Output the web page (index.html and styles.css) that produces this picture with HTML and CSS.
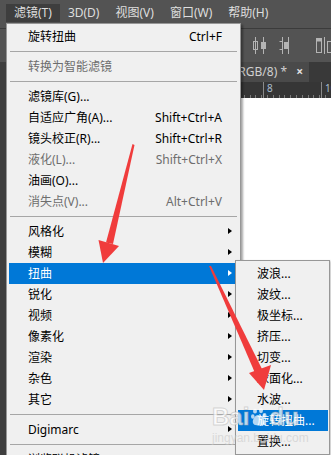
FILE: index.html
```html
<!DOCTYPE html>
<html lang="zh-CN">
<head>
<meta charset="utf-8">
<title>滤镜菜单</title>
<link rel="stylesheet" href="styles.css">
</head>
<body>
<div class="app">
  <div class="menubar">
    <span class="mb-item active">滤镜(T)</span>
    <span class="mb-item">3D(D)</span>
    <span class="mb-item">视图(V)</span>
    <span class="mb-item">窗口(W)</span>
    <span class="mb-item">帮助(H)</span>
  </div>
  <div class="toolbar">
    <svg class="tb-icon" width="13" height="17" viewBox="0 0 13 17"><path d="M2.5 0v17M10.5 0v17" stroke="#b4b4b4" stroke-width="1"/><rect x="0.5" y="4.5" width="4" height="8" fill="none" stroke="#b4b4b4"/><rect x="8" y="5" width="5" height="7" fill="#b4b4b4"/></svg>
    <svg class="tb-icon" width="14" height="17" viewBox="0 0 14 17"><path d="M2.5 4.5h3v8h-3M11.5 0v17" stroke="#b4b4b4" fill="none"/><rect x="7" y="5" width="4" height="7" fill="#b4b4b4"/><path d="M5.5 0v17" stroke="#b4b4b4"/></svg>
    <span class="tb-sep"></span>
    <svg class="tb-icon" width="16" height="17" viewBox="0 0 16 17"><rect x="0.5" y="1.5" width="5" height="14" fill="none" stroke="#b4b4b4"/><rect x="0.5" y="1.5" width="5" height="3" fill="#b4b4b4"/><path d="M8.5 0v17" stroke="#b4b4b4"/><rect x="11.5" y="4.5" width="5" height="11" fill="none" stroke="#b4b4b4"/></svg>
  </div>
  <div class="work">
    <div class="tools"></div>
    <div class="doc">
      <div class="tabs">
        <div class="tab">未标题-1 @ 66.7%(RGB/8) * <span class="close">×</span></div>
      </div>
      <div class="ruler">
        <span class="major">8</span>
        <span class="major">10</span>
      </div>
      <div class="canvas"></div>
    </div>
  </div>

  <div class="menu">
    <div class="item"><span>旋转扭曲</span><span class="key">Ctrl+F</span><span></span></div>
    <div class="sep"></div>
    <div class="item disabled"><span>转换为智能滤镜</span><span class="key"></span><span></span></div>
    <div class="sep"></div>
    <div class="item"><span>滤镜库(G)...</span><span class="key"></span><span></span></div>
    <div class="item"><span>自适应广角(A)...</span><span class="key">Shift+Ctrl+A</span><span></span></div>
    <div class="item"><span>镜头校正(R)...</span><span class="key">Shift+Ctrl+R</span><span></span></div>
    <div class="item disabled"><span>液化(L)...</span><span class="key">Shift+Ctrl+X</span><span></span></div>
    <div class="item"><span>油画(O)...</span><span class="key"></span><span></span></div>
    <div class="item disabled"><span>消失点(V)...</span><span class="key">Alt+Ctrl+V</span><span></span></div>
    <div class="sep"></div>
    <div class="item"><span>风格化</span><span class="key"></span><span class="arr"></span></div>
    <div class="item"><span>模糊</span><span class="key"></span><span class="arr"></span></div>
    <div class="item hl"><span>扭曲</span><span class="key"></span><span class="arr"></span></div>
    <div class="item"><span>锐化</span><span class="key"></span><span class="arr"></span></div>
    <div class="item"><span>视频</span><span class="key"></span><span class="arr"></span></div>
    <div class="item"><span>像素化</span><span class="key"></span><span class="arr"></span></div>
    <div class="item"><span>渲染</span><span class="key"></span><span class="arr"></span></div>
    <div class="item"><span>杂色</span><span class="key"></span><span class="arr"></span></div>
    <div class="item"><span>其它</span><span class="key"></span><span class="arr"></span></div>
    <div class="sep"></div>
    <div class="item"><span>Digimarc</span><span class="key"></span><span class="arr"></span></div>
    <div class="sep"></div>
    <div class="item"><span>浏览联机滤镜...</span><span class="key"></span><span></span></div>
  </div>

  <div class="submenu">
    <div class="sitem">波浪...</div>
    <div class="sitem">波纹...</div>
    <div class="sitem">极坐标...</div>
    <div class="sitem">挤压...</div>
    <div class="sitem">切变...</div>
    <div class="sitem">球面化...</div>
    <div class="sitem">水波...</div>
    <div class="sitem hl">旋转扭曲...</div>
    <div class="sitem">置换...</div>
  </div>

  <svg class="annot" width="331" height="455" viewBox="0 0 331 455">
    <polygon points="132.5,144 134.5,145 113,244 106,242.5" fill="#f03c3c"/>
    <polygon points="98.5,240 119,246 103,263" fill="#f03c3c"/>
    <polygon points="209,266 211,266 262,369 255,373" fill="#f03c3c"/>
    <polygon points="249,373 271,365 264,390" fill="#f03c3c"/>
  </svg>

  <div class="watermark">
    <div class="wm-logo">
      <span class="wm-big">Bai</span>
      <svg class="wm-paw" width="17" height="18" viewBox="0 0 17 18">
        <ellipse cx="4" cy="3" rx="2" ry="2.6"/>
        <ellipse cx="10" cy="2.6" rx="2" ry="2.6"/>
        <ellipse cx="1.8" cy="8.5" rx="1.8" ry="2.3"/>
        <ellipse cx="13.5" cy="7.5" rx="2" ry="2.4"/>
        <path d="M7 7c-3 0-6 5-5 8s4 2 6 2 5 1 6-2-4-8-7-8z"/>
      </svg>
      <span class="wm-big">du</span>
    </div>
    <div class="wm-url">jingyan.baidu.com</div>
  </div>
</div>
</body>
</html>
```
FILE: styles.css
```css
html, body {
  margin: 0;
  padding: 0;
}
body {
  width: 331px;
  height: 455px;
  overflow: hidden;
  background: #535353;
  font-family: "Noto Sans", "Noto Sans CJK SC", sans-serif;
  font-size: 12px;
}
.app {
  position: relative;
  width: 331px;
  height: 455px;
  display: flex;
  flex-direction: column;
  overflow: hidden;
}

/* menubar */
.menubar {
  height: 29px;
  box-sizing: border-box;
  background: #535353;
  border-bottom: 1px solid #3b3b3b;
  display: flex;
  align-items: flex-start;
  padding: 4px 0 0 6px;
}
.mb-item {
  height: 18px;
  line-height: 18px;
  padding: 0 8px;
  color: #dedede;
  white-space: nowrap;
}
.mb-item.active {
  background: #3e3e3e;
}

/* toolbar */
.toolbar {
  height: 33px;
  background: #535353;
  display: flex;
  align-items: center;
  padding-left: 253px;
  gap: 11px;
  flex: none;
}
.tb-icon {
  flex: none;
  display: block;
}
.tb-sep {
  width: 1px;
  height: 22px;
  background: #3a3a3a;
  margin: 0 1px 0 2px;
}

/* workspace */
.work {
  flex: 1;
  display: flex;
}
.tools {
  width: 6px;
  background: #3e3e3e;
  flex: none;
}
.doc {
  flex: 1;
  display: flex;
  flex-direction: column;
}
.tabs {
  height: 20px;
  background: #393939;
  display: flex;
  flex: none;
}
.tab {
  width: 303px;
  flex: none;
  box-sizing: border-box;
  background: #4a4a4a;
  color: #d0d0d0;
  font-size: 12px;
  line-height: 20px;
  text-align: right;
  padding-right: 6px;
  white-space: nowrap;
  overflow: hidden;
}
.close {
  display: inline-block;
  margin-left: 6px;
  font-weight: bold;
  color: #e0e0e0;
}
.ruler {
  height: 16px;
  flex: none;
  background-color: #363636;
  background-image: repeating-linear-gradient(to right, #7a7a7a 0 1px, transparent 1px 5.8px);
  background-size: 100% 3px;
  background-repeat: no-repeat;
  background-position: 0 100%;
  display: flex;
  padding-left: 257px;
}
.major {
  width: 58px;
  flex: none;
  border-left: 1px solid #8a8a8a;
  color: #a9bdd0;
  font-size: 10px;
  line-height: 12px;
  padding-left: 3px;
  box-sizing: border-box;
}
.canvas {
  flex: 1;
  background: #ffffff;
}

/* dropdown menu */
.menu {
  position: absolute;
  left: 6px;
  top: 23px;
  width: 235px;
  box-sizing: border-box;
  background: #f0f0f0;
  border: 1px solid #979797;
  padding: 2px 4px 2px 2px;
  box-shadow: 2px 2px 2px rgba(0, 0, 0, 0.35);
  color: #000;
}
.item {
  height: 21px;
  display: grid;
  grid-template-columns: 1fr auto 14px;
  align-items: center;
  padding-left: 19px;
  white-space: nowrap;
  line-height: 21px;
}
.item.disabled {
  color: #6d6d6d;
}
.item.hl {
  background: #0078d7;
  color: #fff;
}
.arr {
  justify-self: start;
  margin-left: 6px;
  width: 0;
  height: 0;
  border-left: 4px solid #000;
  border-top: 3.5px solid transparent;
  border-bottom: 3.5px solid transparent;
  margin-top: -2px;
}
.item.hl .arr {
  border-left-color: #fff;
}
.sep {
  height: 9px;
  margin: 0 -1px 0 1px;
  box-sizing: border-box;
  padding-top: 4px;
}
.sep::before {
  content: "";
  display: block;
  height: 1px;
  background: #a6a6a6;
}

/* submenu */
.submenu {
  position: absolute;
  left: 235px;
  top: 260px;
  width: 95px;
  box-sizing: border-box;
  background: #f0f0f0;
  border: 1px solid #979797;
  padding: 2px 1px 2px 2px;
  box-shadow: 1px 1px 2px rgba(0, 0, 0, 0.25);
}
.sitem {
  height: 21px;
  line-height: 21px;
  padding-left: 19px;
  white-space: nowrap;
  color: #000;
}
.sitem.hl {
  background: #0078d7;
  color: #fff;
}

/* annotations */
.annot {
  position: absolute;
  left: 0;
  top: 0;
  pointer-events: none;
}
.watermark {
  position: absolute;
  left: 212px;
  top: 404px;
  pointer-events: none;
}
.wm-logo {
  display: flex;
  align-items: center;
  height: 26px;
}
.wm-big {
  font-family: "Liberation Sans", sans-serif;
  font-weight: bold;
  font-size: 24px;
  line-height: 26px;
  color: rgba(255, 255, 255, 0.72);
  -webkit-text-stroke: 1px rgba(170, 170, 170, 0.45);
}
.wm-paw {
  fill: rgba(255, 255, 255, 0.7);
  margin: 0 1px 0 2px;
}
.wm-url {
  font-family: "Liberation Sans", sans-serif;
  font-size: 12px;
  line-height: 14px;
  color: rgba(200, 200, 200, 0.6);
  margin-top: 1px;
}
```
